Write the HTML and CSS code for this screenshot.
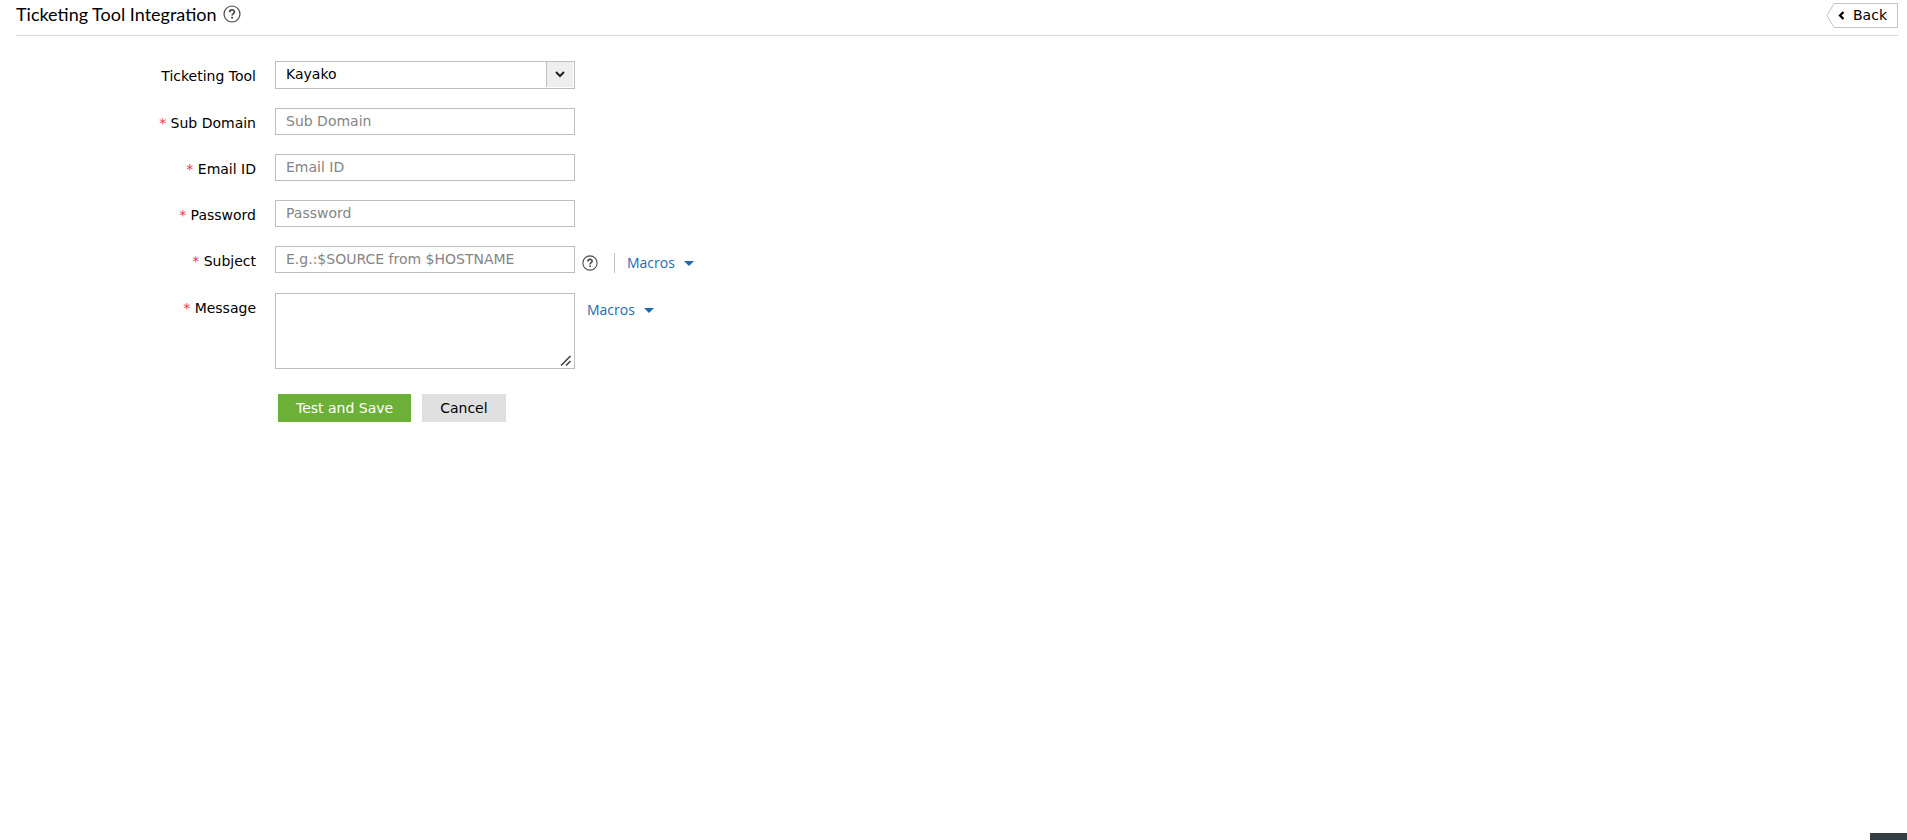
FILE: index.html
```html
<!DOCTYPE html>
<html lang="en">
<head>
    <meta charset="UTF-8">
    <meta name="viewport" content="width=device-width, initial-scale=1.0">
    <title>Ticketing Tool Integration</title>
    <link rel="stylesheet" href="styles.css">
</head>
<body>
    <header class="page-header">
        <h1>Ticketing Tool Integration</h1>
        <button type="button" class="help-btn" aria-label="Help">
            <svg width="18" height="18" viewBox="0 0 18 18" fill="none" stroke="#4a4a4a" stroke-width="1.2">
                <circle cx="9" cy="9" r="8"/>
                <path d="M6.7 7.2c0-3.1 4.7-3 4.7-.3 0 1.8-2.3 1.7-2.3 3.7" stroke-width="1.8"/>
                <path d="M9.1 11.8v1.8" stroke-width="2"/>
            </svg>
        </button>
        <a href="#" class="back-link">
            <svg class="back-edge" width="18" height="25" viewBox="0 0 18 25" fill="none" stroke="#c4c4c4">
                <path d="M18 .5H8L1 12.5l7 12h10"/>
            </svg>
            <span class="back-body">
                <svg width="7" height="9" viewBox="0 0 7 9" fill="none" stroke="#000" stroke-width="2.2">
                    <path d="M5.5 1L2 4.5 5.5 8"/>
                </svg>
                Back
            </span>
        </a>
    </header>

    <form class="tool-form">
        <div class="form-row">
            <label for="tool">Ticketing Tool</label>
            <div class="select-box">
                <select id="tool">
                    <option>Kayako</option>
                </select>
                <span class="select-arrow">
                    <svg width="10" height="7" viewBox="0 0 10 7" fill="none" stroke="#222" stroke-width="2">
                        <path d="M1 1l4 4 4-4"/>
                    </svg>
                </span>
            </div>
        </div>
        <div class="form-row">
            <label for="domain"><span class="required">*</span> Sub Domain</label>
            <input type="text" id="domain" placeholder="Sub Domain">
        </div>
        <div class="form-row">
            <label for="email"><span class="required">*</span> Email ID</label>
            <input type="text" id="email" placeholder="Email ID">
        </div>
        <div class="form-row">
            <label for="password"><span class="required">*</span> Password</label>
            <input type="password" id="password" placeholder="Password">
        </div>
        <div class="form-row">
            <label for="subject"><span class="required">*</span> Subject</label>
            <input type="text" id="subject" placeholder="E.g.:$SOURCE from $HOSTNAME">
            <div class="row-tools">
                <button type="button" class="help-btn" aria-label="Subject help">
                    <svg width="16" height="16" viewBox="0 0 18 18" fill="none" stroke="#4a4a4a" stroke-width="1.2">
                        <circle cx="9" cy="9" r="8"/>
                        <path d="M6.7 7.2c0-3.1 4.7-3 4.7-.3 0 1.8-2.3 1.7-2.3 3.7" stroke-width="1.8"/>
                        <path d="M9.1 11.8v1.8" stroke-width="2"/>
                    </svg>
                </button>
                <span class="divider"></span>
                <a href="#" class="macros">Macros</a>
            </div>
        </div>
        <div class="form-row">
            <label for="message"><span class="required">*</span> Message</label>
            <textarea id="message"></textarea>
            <div class="row-tools message-tools">
                <a href="#" class="macros">Macros</a>
            </div>
        </div>
        <div class="form-actions">
            <button type="button" class="btn btn-save">Test and Save</button>
            <button type="button" class="btn btn-cancel">Cancel</button>
        </div>
    </form>

    <div class="corner-tab"></div>
</body>
</html>
```

FILE: styles.css
```css
* {
    box-sizing: border-box;
}
body {
    margin: 0;
    background: #fff;
    color: #000;
    font-family: "DejaVu Sans", Verdana, sans-serif;
    font-size: 14px;
    line-height: 20px;
}
.page-header {
    display: flex;
    align-items: center;
    margin: 0 9px 0 16px;
    height: 36px;
    padding-bottom: 8px;
    border-bottom: 1px solid #d9d9d9;
}
.page-header h1 {
    margin: 0 6px 0 0;
    font-family: Lato, sans-serif;
    font-size: 18px;
    font-weight: 400;
}
.help-btn {
    display: flex;
    padding: 0;
    border: none;
    background: none;
    cursor: pointer;
}
.back-link {
    display: flex;
    margin-left: auto;
    padding-top: 3px;
    color: #000;
    text-decoration: none;
}
.back-body {
    display: flex;
    align-items: center;
    gap: 8px;
    height: 25px;
    padding-right: 10px;
    border: 1px solid #c4c4c4;
    border-left: none;
}
.back-edge {
    margin-right: -6px;
}
.tool-form {
    padding-top: 25px;
}
.form-row {
    display: flex;
    align-items: flex-start;
    margin-bottom: 19px;
}
.form-row label {
    width: 256px;
    margin-right: 19px;
    padding-top: 5px;
    height: 25px;
    text-align: right;
}
.required {
    color: #e8384f;
}
.form-row input,
.form-row select,
.form-row textarea {
    width: 300px;
    height: 27px;
    margin: 0;
    padding: 0 10px 2px;
    border: 1px solid #bfbfbf;
    border-radius: 0;
    background: #fff;
    color: #000;
    font-family: inherit;
    font-size: 14px;
}
.form-row input::placeholder {
    color: #858585;
}
.select-box {
    position: relative;
}
.form-row select {
    display: block;
    height: 28px;
    appearance: none;
}
.select-arrow {
    position: absolute;
    top: 1px;
    right: 2px;
    bottom: 2px;
    width: 27px;
    display: flex;
    align-items: center;
    justify-content: center;
    border-left: 1px solid #bfbfbf;
    background: #eee;
    pointer-events: none;
}
.form-row textarea {
    height: 76px;
}
.form-row textarea::-webkit-resizer {
    background: url("data:image/svg+xml,%3Csvg xmlns='http://www.w3.org/2000/svg' width='15' height='15' fill='none' stroke='%23444' stroke-width='1.6'%3E%3Cpath d='M2 12.5L11.5 3M7 12.5L11.5 8'/%3E%3C/svg%3E") no-repeat right bottom;
}
.row-tools {
    display: flex;
    align-items: center;
    height: 28px;
    padding: 5px 0 0 7px;
}
.message-tools {
    padding-left: 12px;
}
.divider {
    width: 1px;
    height: 20px;
    margin: 0 12px 0 16px;
    background: #bfbfbf;
}
.macros {
    display: flex;
    align-items: center;
    gap: 9px;
    color: #1a6bb3;
    font-family: "Open Sans", sans-serif;
    text-decoration: none;
}
.macros::after {
    content: "";
    margin-top: 2px;
    border: 5px solid transparent;
    border-top-color: #1a6bb3;
    border-bottom: none;
}
.form-actions {
    display: flex;
    gap: 11px;
    padding: 6px 0 0 278px;
}
.btn {
    height: 28px;
    padding: 0 18px;
    border: none;
    font-family: inherit;
    font-size: 14px;
    cursor: pointer;
}
.btn-save {
    background: #6db038;
    color: #fff;
}
.btn-cancel {
    background: #e0e0e0;
    color: #000;
}
.corner-tab {
    position: fixed;
    right: 0;
    bottom: 0;
    width: 37px;
    height: 7px;
    background: #333f44;
}
```
